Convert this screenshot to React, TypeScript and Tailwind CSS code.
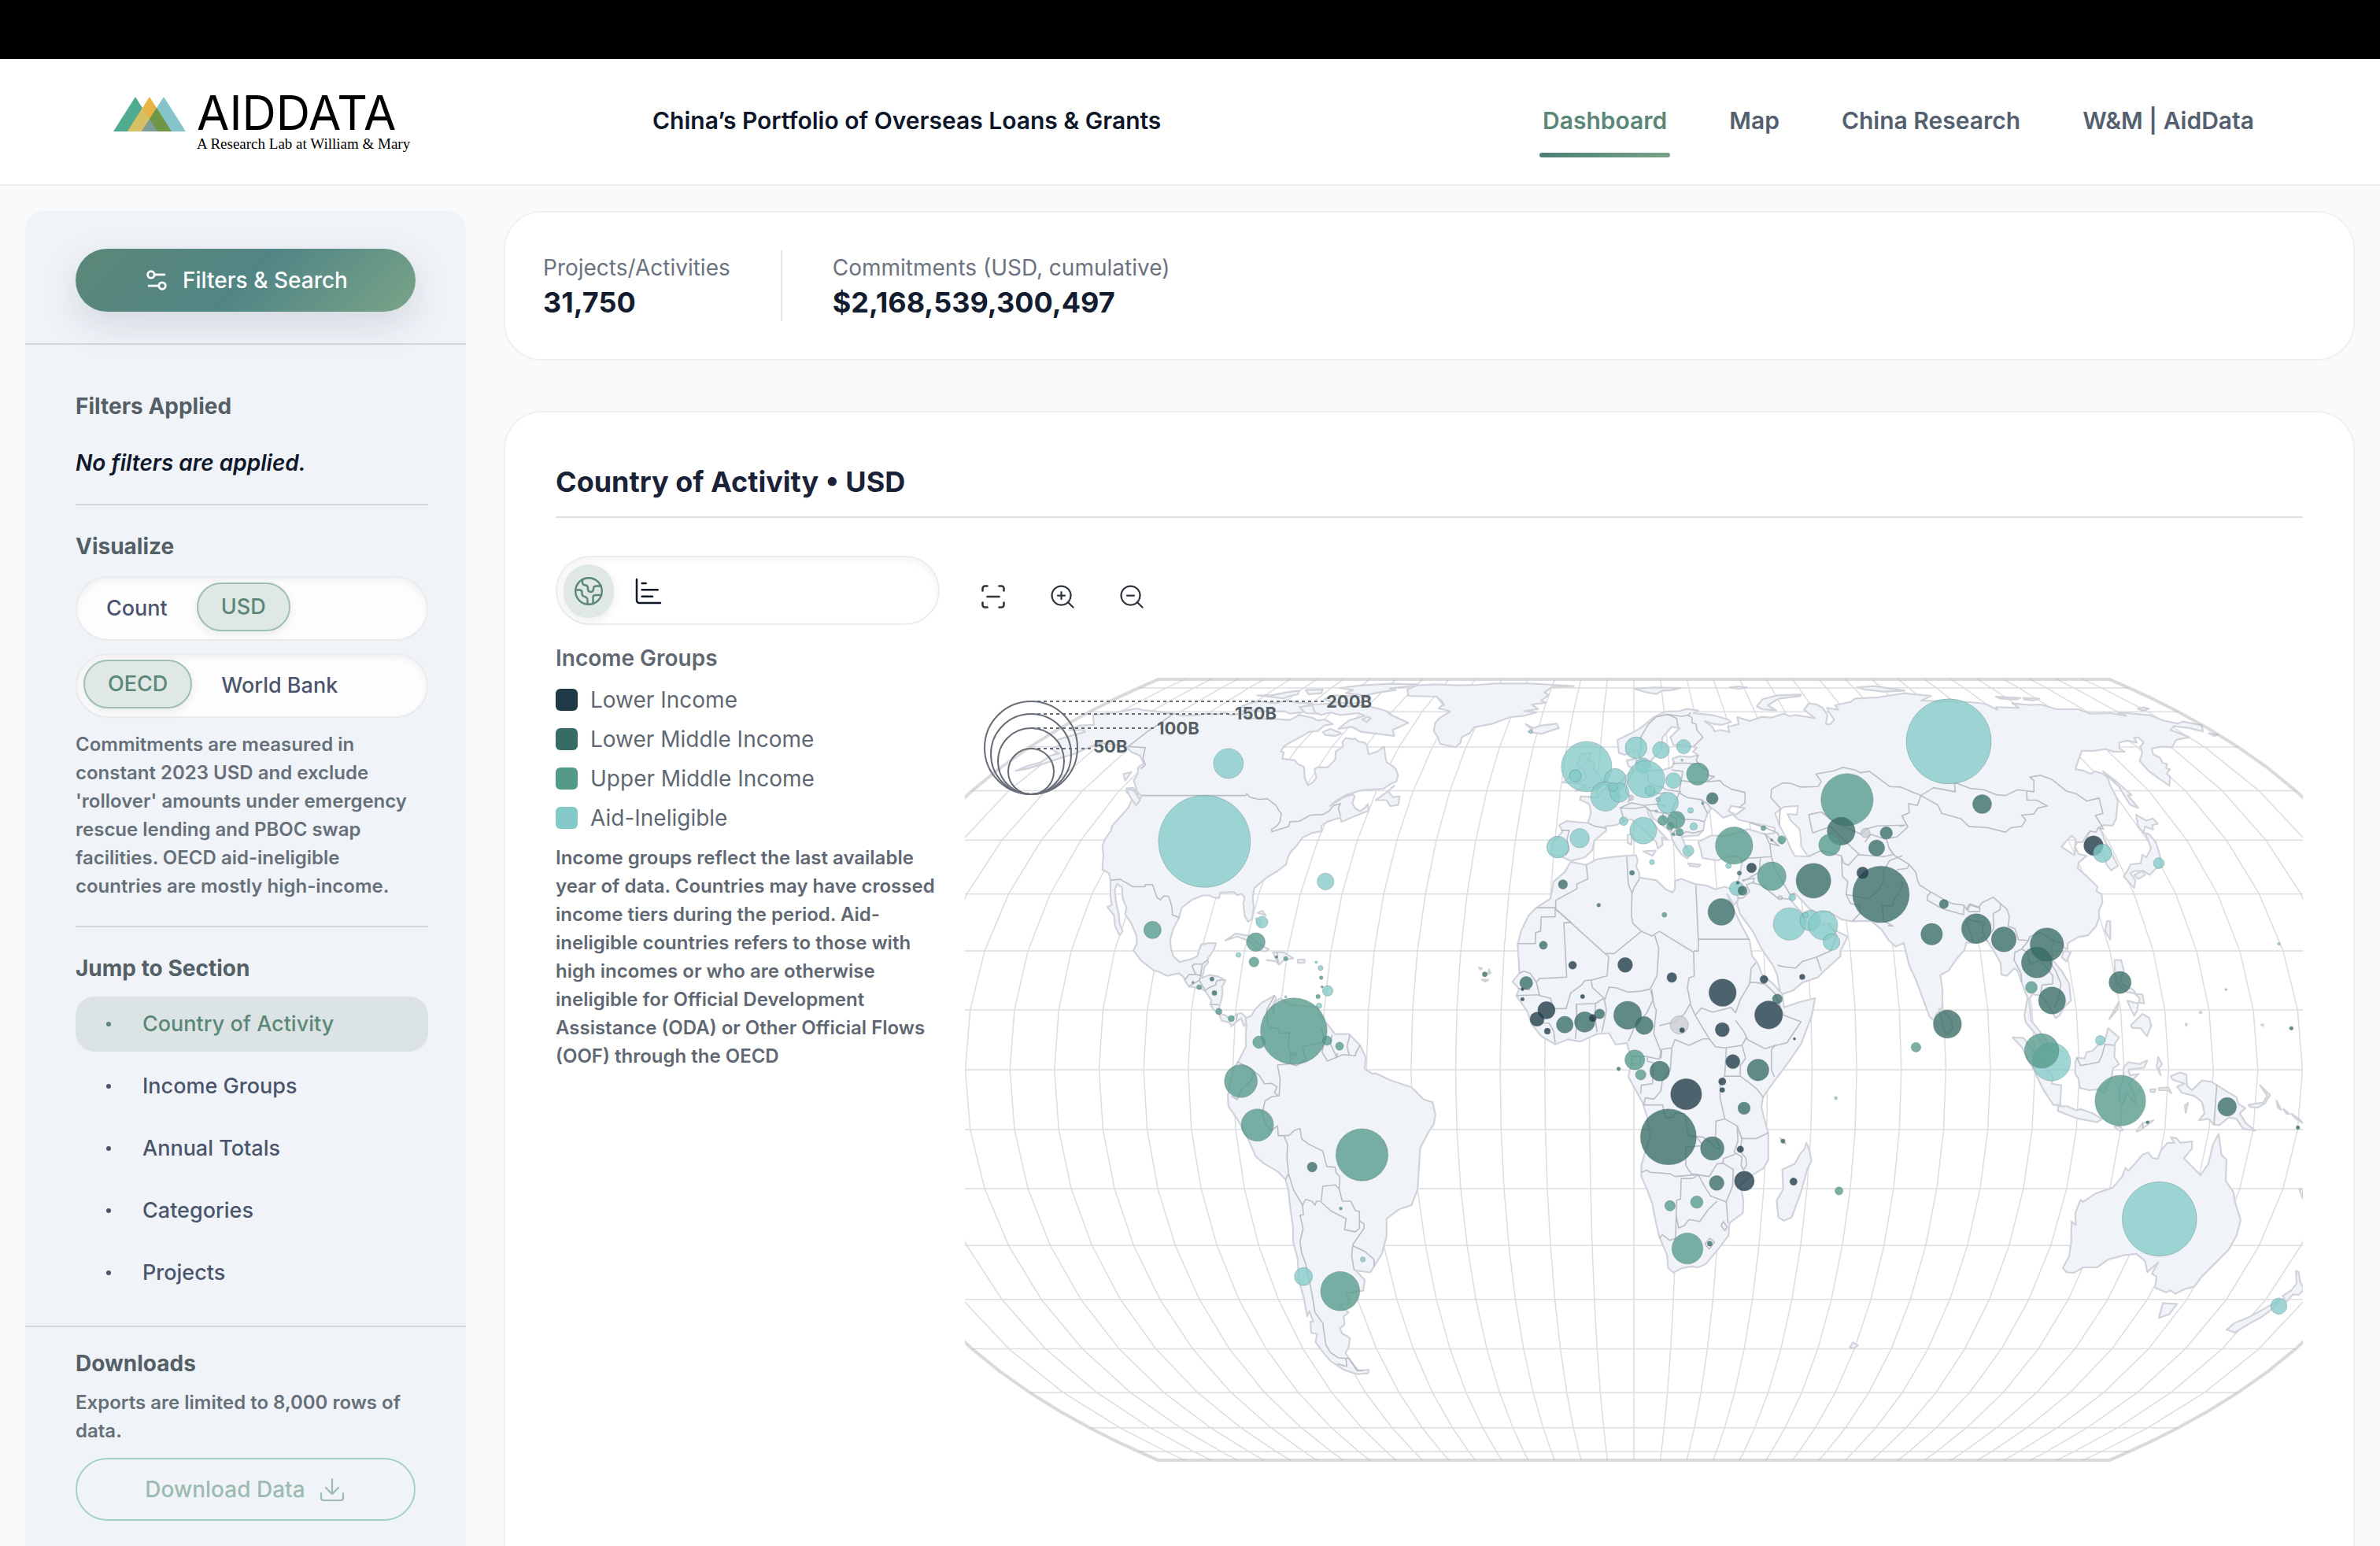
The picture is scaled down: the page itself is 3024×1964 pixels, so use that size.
import React from "react";
import { ChartBar, ScanLine, Settings2, ZoomIn, ZoomOut } from "lucide-react";

/* ------------------------------------------------------------------ */
/* Map geometry                                                        */
/* ------------------------------------------------------------------ */

// Survey tiles: origin on the map canvas and units per canvas pixel.
const TILES: Record<string, [number, number, number, number]> = {
  A: [1220, 840, 2.529, 3.002],
  B: [1800, 840, 2.529, 3.002],
  C: [2400, 840, 2.904, 3.002],
  D: [1220, 1340, 2.529, 2.904],
  E: [1800, 1300, 2.529, 2.8],
  F: [2400, 1300, 2.513, 2.8],
};

const place = (tile: string, x: number, y: number): [number, number] => {
  const [ox, oy, sx, sy] = TILES[tile];
  return [ox + x / sx, oy + y / sy];
};

// "A 10,20 30,40 B 5,6" -> path data; a letter switches the tile.
const trace = (line: string, closed: boolean) => {
  let tile = "A";
  const points: string[] = [];
  for (const token of line.trim().split(/\s+/)) {
    if (TILES[token]) {
      tile = token;
      continue;
    }
    const [x, y] = token.split(",").map(Number);
    const [px, py] = place(tile, x, y);
    points.push(`${px.toFixed(1)} ${py.toFixed(1)}`);
  }
  return `M${points.join("L")}${closed ? "Z" : ""}`;
};

const LAND = [
  // North and Central America
  "A 178,418 215,400 260,385 290,360 318,352 300,340 290,333 322,322 312,300 345,288 400,270 400,262 350,262 385,245 430,243 427,205 500,195 535,187 570,180 585,186 620,190 660,196 685,200 720,208 760,205 790,200 830,202 850,196 870,205 900,200 930,207 925,217 965,219 1010,220 1060,224 1090,205 1130,215 1150,226 1172,222 1198,240 1170,245 1150,265 1120,270 1100,285 1060,310 1040,325 1030,345 1040,348 1035,372 1075,378 1085,392 1105,402 1107,445 1117,472 1130,465 1145,445 1138,412 1150,404 1180,405 1205,375 1207,345 1230,325 1228,308 1240,293 1258,297 1270,295 1278,306 1300,310 1307,320 1312,355 1340,345 1362,325 1366,360 1370,385 1392,402 1400,412 1407,435 1402,458 1380,470 1360,487 1290,492 1240,510 1205,535 1188,552 1230,520 1262,508 1268,515 1260,540 1268,560 1285,572 1300,560 1310,545 1313,570 1265,592 1225,612 1222,596 1180,612 1160,628 1163,648 1130,655 1100,672 1080,705 1060,730 1053,748 1047,775 1020,800 985,825 945,865 940,900 943,940 937,985 925,993 914,970 910,925 914,902 905,887 890,892 880,880 835,882 832,903 812,900 800,893 780,893 745,910 712,940 703,978 685,1020 675,1060 677,1095 685,1125 705,1147 745,1135 762,1125 768,1100 775,1080 800,1075 822,1075 815,1100 795,1135 797,1150 785,1165 780,1195 770,1210 800,1197 830,1203 853,1217 842,1240 843,1270 836,1305 832,1320 838,1345 855,1352 868,1368 890,1345 905,1342 918,1358 920,1378 912,1392 903,1362 885,1378 872,1392 865,1378 840,1370 832,1345 815,1330 803,1308 808,1295 790,1262 775,1248 735,1240 722,1218 718,1205 703,1190 665,1200 640,1185 620,1178 580,1140 557,1103 568,1075 566,1045 550,1000 530,965 535,940 522,905 520,862 505,850 497,870 500,915 510,970 512,1000 522,1030 512,1045 498,1010 495,970 473,937 487,930 483,895 483,835 478,808 457,795 460,740 457,705 465,680 485,645 488,628 520,585 540,560 555,520 535,500 535,485 555,483 575,505 583,512 572,540 570,500 558,455 570,430 572,405 590,390 578,360 548,345 535,325 490,318 445,312 410,330 370,352 320,370 270,390 215,410",
  "A 955,130 1000,130 1050,118 1090,112 1085,126 1060,132 1040,142 990,135",
  "A 905,172 930,160 960,152 1010,160 1050,150 1085,158 1130,160 1105,175 1115,192 1060,200 1040,190 980,192 925,185",
  "A 1090,175 1130,168 1165,175 1150,200 1110,198",
  "A 1110,110 1165,108 1160,122 1120,126",
  "A 1170,145 1200,130 1300,135 1318,150 1260,162 1190,155",
  "A 1130,165 1180,162 1250,172 1300,168 1340,180 1370,190 1385,205 1440,235 1390,262 1395,285 1350,278 1290,270 1258,250 1215,258 1250,225 1300,208 1280,198 1220,205 1190,195 1160,205 1140,195",
  "A 1220,102 1290,92 1380,86 1470,88 1430,98 1380,104 1400,110 1350,118 1300,130 1240,122 1262,110",
  "A 1165,270 1190,258 1225,275 1205,285 1175,282",
  "A 1292,222 1308,212 1320,218 1306,232",
  "A 1395,475 1370,500 1335,530 1370,530 1382,553 1408,548 1412,515 1390,518 1375,495",
  "A 535,485 560,495 578,530 565,550 545,515",
  "A 525,430 550,423 530,455",
  "A 852,1065 885,1038 930,1048 960,1080 992,1098 980,1107 955,1100 925,1065 890,1050",
  "A 985,1140 1018,1145 1005,1110 1040,1110 1070,1133 1040,1140 1025,1157 1015,1145",
  "A 1085,1138 1107,1138 1107,1150 1085,1150",
  "A 955,960 972,952 982,970 972,965",
  "A 950,980 962,985 964,1010 955,1000",
  // Greenland, Iceland, Arctic islands
  "A 1440,132 1530,135 1548,152 1555,170 B 65,135 85,165 70,180 90,185 108,192 75,215 60,235 55,265 68,290 75,315 125,328 140,312 145,290 170,275 185,252 245,238 300,213 345,208 385,195 345,190 390,182 370,165 415,158 400,150 425,128 410,120 435,98 505,95 440,90 360,85 250,85 200,90 130,92 60,88 0,92 -30,108",
  "B 350,240 375,255 400,245 450,238 457,255 400,277 358,268 372,262",
  "B 700,105 760,100 850,102 820,110 790,112 770,125 735,118",
  "B 1235,127 1160,130 1112,145 1093,172 1110,183 1155,187 1128,168 1165,142 1232,133",
  "B 1005,100 1035,96 1062,100 1035,105",
  "B 1415,100 1470,95 1568,112 1500,116 1440,108",
  "C 395,135 450,138 485,140 470,146 410,142",
  "C 495,140 555,143 530,150 500,146",
  "C 918,181 940,176 960,182 935,188",
  "C 1180,275 1215,280 1200,285",
  // British Isles
  "B 530,355 560,350 550,378 572,385 568,410 590,440 602,465 570,480 510,495 545,475 518,465 545,445 535,410 515,395",
  "B 495,420 520,412 530,440 515,465 468,463 490,445",
  // Eurasia
  "B 645,300 690,275 715,258 730,245 760,215 800,192 845,190 870,182 905,188 890,198 950,205 1000,222 1010,232 980,243 950,238 925,228 950,250 958,268 975,262 1005,270 1000,250 1035,240 1030,213 1070,228 1110,212 1140,215 1180,200 1200,210 1215,205 1280,217 1245,185 1260,160 1285,165 1305,178 1320,205 1315,240 1330,240 1342,222 1325,195 1318,178 1355,185 1345,168 1395,155 1410,142 1480,138 1568,122 C 75,124 155,132 120,150 180,152 240,155 300,156 355,162 400,185 395,175 480,178 455,160 520,167 560,165 620,183 700,183 740,200 820,198 875,208 845,195 900,200 960,205 1010,225 1065,238 1085,230 1155,245 1158,268 1110,255 1050,248 1040,262 1108,290 1060,300 1045,328 1010,325 970,332 975,355 1000,368 1010,388 1027,392 1022,408 1037,412 1025,430 1038,440 1035,475 1000,450 960,420 925,380 935,350 928,325 940,310 920,290 905,292 915,310 880,303 850,310 850,332 870,345 830,345 800,335 755,342 712,342 700,375 688,412 720,418 745,430 760,420 790,430 808,445 815,470 845,530 838,600 825,627 790,625 775,635 785,650 795,680 815,720 845,780 820,797 803,775 795,740 750,740 735,720 725,700 735,655 715,690 695,690 685,712 690,680 675,665 655,685 637,708 662,725 685,740 688,710 700,735 730,742 700,768 697,790 730,820 770,860 765,875 785,890 788,920 775,950 775,980 765,1010 735,1045 700,1052 660,1075 660,1098 645,1092 640,1075 612,1070 600,1090 605,1140 640,1185 665,1230 672,1295 650,1315 630,1350 615,1362 605,1340 580,1300 560,1275 530,1270 517,1290 525,1370 555,1410 578,1440 590,1470 575,1475 540,1420 505,1378 500,1350 512,1285 490,1225 475,1180 462,1172 435,1200 415,1195 412,1150 385,1100 368,1075 350,1050 320,1075 285,1073 280,1100 250,1135 220,1180 190,1197 198,1260 197,1320 175,1345 165,1370 150,1355 130,1300 100,1215 75,1160 55,1075 25,1088 0,1065 B 1495,1025 1460,990 1400,992 1365,985 1325,955 1290,960 1262,945 1240,915 1215,885 1200,905 1215,930 1235,955 1245,985 1275,1010 1325,1000 1332,1020 1385,1050 1362,1105 1362,1125 1310,1180 1290,1205 1240,1225 1210,1255 1170,1272 1158,1195 1145,1160 1110,1100 1080,1030 1040,965 1030,930 1030,905 1018,875 1035,830 1045,770 1040,745 1000,745 965,760 918,750 912,715 905,690 945,665 1000,665 1040,650 1065,640 1120,660 1150,655 1150,635 1075,615 1035,605 1020,590 1055,560 1010,552 1002,572 1020,582 985,597 960,570 947,560 935,580 925,612 922,640 905,665 890,665 852,670 862,700 880,735 870,752 852,738 835,710 822,680 815,650 790,625 760,600 748,568 740,560 745,585 760,615 775,640 806,680 788,672 790,700 775,715 770,690 740,655 710,625 690,602 665,610 640,625 605,630 610,645 570,685 565,720 540,748 495,762 465,745 430,735 440,690 468,650 458,625 480,610 550,617 560,580 555,545 525,528 528,515 580,520 600,490 650,465 680,430 700,412 680,400 675,378 705,372 710,408 740,418 790,415 820,405 828,388 822,372 845,362 880,365 905,358 888,345 900,330 855,318 825,320 815,290 845,255 820,250 790,290 785,340 760,370 740,395 722,375 705,335 670,357 650,350",
  // Africa
  "B 495,765 545,777 580,755 620,748 670,742 705,740 710,760 705,785 715,805 715,825 770,835 800,870 822,882 830,868 830,838 850,830 895,850 930,855 960,870 990,860 1020,872 1035,905 1020,930 998,888 1015,940 1045,1010 1070,1065 1078,1125 1095,1150 1110,1195 1145,1230 1175,1270 1180,1320 1230,1300 1280,1285 1270,1350 1235,1460 1200,1520 E 1150,205 1130,235 1112,265 1108,300 1118,345 1130,390 1130,485 1115,515 1085,535 1040,575 1050,630 1048,675 1005,710 1002,755 975,795 930,855 905,868 880,865 850,872 825,887 808,870 805,825 780,760 767,700 757,640 740,590 722,545 722,505 735,455 750,400 740,330 725,280 700,230 680,190 692,130 675,70 640,75 628,55 618,35 580,38 525,65 485,57 445,75 B 400,1430 370,1385 355,1335 320,1275 330,1250 308,1222 330,1190 325,1080 335,1030 360,970 385,940 430,905 440,840 475,805",
  "E 1252,425 1262,450 1268,490 1255,520 1235,600 1205,690 1180,702 1162,690 1157,630 1178,590 1175,520 1215,500 1235,460 1245,450",
  // South America
  "A 920,1390 917,1362 935,1352 950,1325 968,1303 1010,1275 1015,1285 1002,1320 1008,1350 1010,1300 1030,1285 1060,1310 1110,1315 1150,1318 1152,1340 1170,1370 1205,1422 1250,1422 1285,1465 1303,1510 1300,1555 D 1325,70 1335,68 1385,95 1450,120 1490,165 1518,175 1527,220 1522,255 1505,285 1478,345 1475,400 1470,495 1455,540 1450,555 1410,570 1370,605 1370,670 1355,735 1330,780 1318,803 1270,795 1300,830 1295,870 1240,880 1252,915 1218,925 1248,950 1232,965 1235,995 1220,1010 1228,1028 1252,1045 1248,1080 1238,1100 1255,1130 1280,1165 1313,1162 1310,1175 1275,1178 1235,1163 1190,1130 1168,1100 1142,1060 1147,1030 1128,1025 1125,985 1135,985 1122,945 1115,965 1105,900 1088,830 1085,755 1070,690 1070,640 1060,560 1055,500 1045,460 1020,430 975,400 950,375 925,310 895,245 862,190 860,150 868,100 878,50 895,22 A 905,1500 918,1470 918,1410",
  // Oceania and South-East Asia
  "F 555,870 575,830 582,780 583,705 597,718 595,675 612,628 620,635 660,605 715,585 745,545 755,515 765,525 785,500 810,467 828,460 842,480 858,482 870,450 890,425 912,425 900,405 920,410 930,425 968,420 968,445 942,480 995,540 1020,500 1035,430 1053,393 1062,468 1078,485 1075,560 1100,600 1105,635 1115,670 1123,700 1110,755 1085,805 1045,850 1000,900 975,937 945,945 915,962 900,950 885,957 850,940 855,902 840,890 860,850 825,885 818,845 790,820 750,825 700,840 665,868 620,868 590,888 568,886",
  "F 875,995 920,998 895,1035 862,1048",
  "F 1078,1090 1105,1065 1150,1045 1215,1005 1250,985 1225,1015 1190,1045 1155,1065 1105,1100",
  "F 1257,970 1285,950 1302,925 1300,880 1308,885 1313,920 1326,945 1310,965 1290,965 1270,990",
  "F 900,188 930,175 950,182 952,222 968,238 1000,203 1030,208 1075,240 1110,262 1115,285 1138,302 1120,320 1140,355 1170,382 1130,375 1110,340 1085,335 1055,362 1038,360 1020,340 990,345 1008,320 1000,280 975,258 935,247 920,225 945,215 905,200",
  "F 600,122 625,125 632,102 650,98 675,70 690,60 700,18 735,50 722,72 720,120 735,145 715,160 712,190 695,225 688,250 670,235 640,238 610,230 605,195 595,180 595,140",
  "F 395,50 430,52 470,110 500,160 525,190 520,215 550,220 547,290 525,290 490,230 460,160 425,85",
  "F 540,295 570,295 600,310 612,305 650,320 680,340 665,352 600,338 540,312",
  "F 750,155 765,138 800,145 825,132 815,158 765,165 770,185 798,180 768,212 790,270 785,285 760,245 750,285 738,280 735,230 748,200",
  "F 860,120 872,145 862,160 868,185 855,155",
  "F 790,385 810,355 845,345 815,370 800,382",
  "F 720,368 735,365 748,380 738,383",
  "F 835,235 852,235 848,245 835,243",
  "F 862,230 892,228 902,248 890,238 862,238",
  "F 945,292 955,283 948,318",
  "F 1148,290 1195,282 1208,258 1185,220 1217,255 1200,285 1178,300 1155,298",
  "F 1238,275 1253,308 1242,300",
  "F 1260,305 1278,322 1268,320",
  "F 1285,322 1310,340 1322,355 1300,340",
  "F 1310,590 1322,590 1322,625",
  "C 833,1140 857,1140 867,1180 855,1215 865,1235 900,1252 912,1268 880,1262 850,1240 835,1200",
  "C 910,1270 935,1270 942,1305 922,1302 925,1285",
  "C 880,1295 920,1305 915,1335 905,1352 890,1320",
  "C 893,1388 910,1370 935,1345 960,1360 968,1390 952,1430 930,1400 898,1398",
  "C 848,1300 842,1330 813,1365 835,1325",
  "C 805,990 817,992 817,1062 798,1030",
  "C 645,1105 672,1108 655,1145 638,1130",
  // Japan and Sakhalin
  "C 945,655 960,660 985,690 1000,740 1005,785 985,790 962,815 940,800 905,800 890,808 910,835 905,865 888,845 866,820 880,800 892,775 930,770 935,738 950,748 967,715 960,690",
  "C 912,585 950,608 975,600 992,620 972,625 975,642 945,630 940,655 920,630",
  "C 790,420 840,460 895,510 882,512 920,560 890,548 850,480",
  "C 905,815 935,800 945,815 920,830",
  // Small islands
  "B 728,725 768,722 758,742",
  "B 678,662 692,660 690,700 678,692",
  "B 872,770 912,776 905,784 878,780",
  "C 185,1325 205,1335 232,1370 235,1400 215,1425 200,1400",
  "E 1392,1152 1402,1135 1418,1145 1405,1157",
  "B 200,1168 210,1172 204,1176",
  "B 232,1175 238,1190 230,1192",
  "B 210,1215 230,1215 220,1222",
  "E 1168,408 1174,418 1186,428 1178,424",
  "C 1147,1337 1153,1337 1153,1342 1147,1342",
  "C 1095,1382 1100,1384 1097,1391",
  "C 1374,1386 1382,1386 1380,1392",
];

const SEAS = [
  "B 1152,580 1180,555 1225,552 1222,585 1192,582 1200,605 1230,640 1235,680 1235,705 1258,745 1215,742 1200,710 1190,680 1165,625",
];

const BORDERS = [
  "A 583,512 917,512 921,505 930,518 960,527 987,524 1015,550 1025,572 1032,580 1028,610 1018,628 1000,642 1002,650 1055,630 1060,612 1090,610 1125,587 1165,585 1185,572 1200,550 1222,543 1215,560 1222,590",
  "A 685,200 640,238 600,270 540,325 595,330 587,370 595,395 580,410",
  "A 483,835 515,832 555,860 593,860 595,852 618,852 632,900 643,910 655,895 670,897 680,935 682,968 705,978",
  "A 722,1215 735,1195 757,1195 745,1162 752,1155 778,1155 795,1140",
  "A 778,1155 772,1200 755,1192",
  "A 735,1240 768,1217 772,1208",
  "A 768,1217 788,1255 800,1245 820,1235 825,1218 850,1215",
  "A 805,1308 830,1310",
  "A 890,1345 887,1372",
  "A 1018,1110 1022,1150",
  "A 1010,1275 985,1330 988,1385 1000,1397 1020,1400 1028,1420 1058,1415 1055,1470 1062,1500 1060,1535 1020,1540 D 1020,40 1028,90 1025,152 1010,140 1018,118 1000,105 978,107 960,75 945,62 915,40 890,25",
  "D 945,62 935,95 905,125 890,165 872,152",
  "D 1025,150 1000,155 980,170 970,215 985,262 1000,280 1020,262 1022,298 1040,298 1052,330 1050,380 1055,440 1045,460",
  "D 1040,298 1055,298 1075,278 1092,272 1097,310 1120,330 1165,355 1178,412 1205,415 1208,435 1220,450 1218,495 1205,480 1165,485 1160,540 1145,540 1140,555 1130,540 1110,533 1100,555 1072,500 1055,440",
  "D 1218,495 1228,540 1255,540 1270,575 1283,578 1283,640 1270,653 1235,645 1240,605 1190,575 1160,543",
  "D 1283,612 1298,625 1298,640 1262,700 1258,740 1266,795",
  "D 1262,705 1300,725 1330,755 1330,780",
  "D 1100,555 1103,590 1092,592 1102,640 1092,690 1097,730 1110,770 1130,880 1140,950 1165,990 1175,1070 1190,1098 1215,1118 1250,1120 1275,1165 1295,1165",
  "D 1240,1120 1242,1150 1212,1140",
  "A 1170,1450 1163,1490 1180,1525 1210,1510 1212,1495",
  "A 1195,1425 1190,1460 1210,1510 1230,1500 1270,1505 1272,1492 1285,1465",
  "A 1252,1425 1243,1470 1250,1502",
  "A 1060,1535 1080,1542 1110,1520 1100,1470 1160,1455 1170,1440 1160,1400",
  "B 720,350 720,290 745,240 770,212 805,203 835,218 840,250",
  "B 805,203 850,210 875,205 880,195",
  "B 870,205 885,215 885,235 898,240 900,262 920,290 890,325",
  "B 905,358 898,378 912,400 935,415 935,435 957,440 930,460 890,462 850,455 855,420 820,415",
  "B 822,390 860,388 898,392",
  "B 850,455 845,490 848,505 870,520 915,528 935,545 945,560",
  "B 930,460 975,455 985,470 1012,488 1055,500 1055,540 1035,560",
  "B 915,528 925,560 935,580",
  "B 740,418 745,460 775,478 790,480 800,490 845,497",
  "B 700,415 685,440 675,470 672,500 690,520 678,540",
  "B 652,560 690,540 730,550 770,545 800,552",
  "B 655,560 700,562 735,555 750,570 775,570",
  "B 845,497 835,530 820,570 860,603 900,605 925,612",
  "B 550,617 575,630 610,637",
  "B 465,645 490,645 483,680 490,720 478,740",
  "B 655,560 662,590 660,600 672,612",
  "B 740,490 780,505 800,500",
  "B 770,575 800,580 835,600 835,640 820,660 850,665 865,650 890,655 922,645",
  "B 790,580 795,610 815,630 820,650",
  "B 610,490 640,500 665,520",
  "B 1120,660 1135,700 1140,745 1105,748 1060,752 1045,765",
  "B 1070,615 1120,635 1160,655 1175,700",
  "B 1115,655 1150,690 1165,705 1135,695",
  "B 1105,748 1100,805 1048,840",
  "B 1045,835 1085,828 1080,845 1060,852 1070,878 1050,902 1030,905",
  "B 1080,845 1110,855 1160,903 1205,908",
  "B 1140,745 1150,790 1180,850 1200,890 1215,885",
  "B 1258,745 1300,722 1365,742",
  "B 1365,742 1368,820 1385,840 1380,890 1395,925 1422,930 1425,960 1400,992",
  "B 1365,742 1372,770 1388,778 1418,738 1470,742 1500,745 1530,738",
  "B 1380,890 1450,905 1480,880 1500,840 1500,800 1520,760 1560,742",
  "C 50,840 45,870 25,900 10,935 -25,930 -20,990 15,1010 -5,1008",
  "B 1165,625 1168,560 1138,520 1140,488 1175,465 1200,465 1235,480 1290,478 1300,458 1283,430 1340,418 1370,405 1410,415 1425,425 1455,420 1520,478 C 45,480 85,498 118,512 105,550 73,543 75,578 48,590 70,632 30,670 0,675",
  "B 1272,655 1260,585 1300,575 1350,620 1430,660 1445,640 1480,628 1568,625 C 40,630 60,625",
  "B 1272,655 1330,630 1380,690 1425,740",
  "B 1440,690 1460,660 1510,680 1515,700 C 0,712 15,735",
  "B 1160,1160 1180,1165 1218,1170 1240,1145 1285,1128 1300,1180",
  "B 1285,1128 1330,1105 1350,1045 1325,1000",
  "C 118,512 165,482 245,498 242,462 300,485 350,490 400,510 430,512 475,490 535,498 535,455 520,442 560,435 600,450 655,495 690,505 730,533 775,522 790,580 762,588 790,635",
  "C 118,512 180,548 195,580 265,600 295,630 365,635 430,652 450,635 490,630 505,605 490,587 535,582 550,560 585,552 545,530 510,530 508,497",
  "C 735,660 742,648 765,652 772,635 795,640",
  "C 755,735 800,725",
  "C 0,710 20,740 75,775 68,790 30,795",
  "C 75,775 100,805 105,835 115,855 155,880 205,910 235,925 275,930 290,950 300,930 330,940 345,920 385,900 412,925 435,945 445,975 440,1010 465,1020 478,1062 515,1065 520,1050 560,1035 612,1070",
  "C 155,880 142,895 142,912 200,945 275,967 278,930",
  "C 288,940 298,925 335,940 335,955 295,955 288,940",
  "C 285,990 300,1035 310,1070",
  "C 290,985 350,998 345,1030 365,1070",
  "C 412,925 410,948 385,962 387,1020 365,1050",
  "C 515,1065 490,1098 465,1110 462,1140 488,1190 490,1225",
  "C 490,1098 510,1110 520,1155 560,1140 605,1200 605,1230 565,1235 558,1280",
  "C 560,1090 575,1120 615,1180 635,1230 625,1290 610,1320",
  "F 600,122 612,150 640,145 670,138 680,115 690,75 718,78",
  "F 1047,218 1038,360",
  "F 810,355 812,372",
  "B 545,777 550,830 515,850 515,868 447,912 447,945 605,1115 635,1115 722,1030 695,1000 690,970 692,885 680,850 675,745",
  "B 692,885 700,860 716,830",
  "B 385,940 445,940 445,975 400,975 398,1030 382,1035 382,1077 325,1077",
  "B 447,945 497,997 473,997 482,1205 395,1210 385,1225 365,1190 345,1182 328,1190",
  "B 605,1115 617,1125 612,1200 565,1215 540,1218 530,1235 495,1265 480,1325 440,1325 430,1285 395,1275 385,1225",
  "B 722,1030 755,1048 780,1030 890,1110 892,1200 875,1208 870,1245 880,1305 860,1345 830,1375 780,1390",
  "B 765,1045 778,1095 772,1200 750,1250 720,1258 680,1262 640,1245 618,1243 605,1290",
  "B 897,855 905,1060 1070,1060",
  "B 905,1060 905,1105 890,1105",
  "B 560,1215 565,1245 602,1285 575,1305 513,1308 515,1340",
  "B 602,1285 610,1330 595,1415",
  "B 575,1305 572,1350 580,1415",
  "B 513,1308 515,1380 510,1440",
  "B 400,1380 425,1380 440,1410 445,1455",
  "B 320,1275 395,1272",
  "B 325,1248 365,1252",
  "B 755,1250 760,1290 740,1340 700,1395 680,1450",
  "B 752,1255 765,1320 770,1330 762,1420 785,1490",
  "B 785,1515 788,1480 820,1475 830,1443 875,1465 920,1440 940,1440 905,1370 895,1350 880,1310",
  "B 895,1350 915,1322 950,1338 980,1330 1010,1320 1025,1340 1040,1290 1070,1230 1075,1170 1090,1150",
  "B 1068,1225 1090,1225 1120,1232 1150,1265 1180,1350 1235,1375 1190,1455 1145,1468 1120,1478 1065,1445 1050,1410 1025,1370",
  "B 940,1440 960,1470 990,1475 1045,1465 1060,1435",
  "B 1155,1462 1140,1480 1140,1560 1150,1585",
  "E 820,90 815,165 790,200 785,240 762,270 735,265 730,290 790,290 800,335 825,335 830,318 862,322 872,400 920,405 940,420 960,445 975,445 960,405 962,348 990,340 975,265 975,215 990,185 995,90",
  "E 1045,75 1057,125 1040,150 1040,188 990,188",
  "E 1040,188 1090,230 1115,265",
  "E 990,340 1030,365 1045,410 1090,410 1130,390",
  "E 1030,365 1032,420 1020,458 1045,475 1043,505 1050,522 1060,505 1058,480 1040,455 1045,410",
  "E 900,405 920,435 865,440 865,505 882,535 940,545 965,500 985,498 985,482 1025,465",
  "E 722,530 740,522 750,530 815,535 830,545 905,538",
  "E 905,538 925,580 945,615 995,635 1015,580 1018,520 980,495",
  "E 905,540 885,552 850,552 848,625 835,630 832,765 812,772 790,752 780,765",
  "E 833,680 842,728 860,720 875,698 910,705 935,665 965,632",
  "E 995,635 1000,710",
  "E 978,720 985,705 998,725 990,737 978,720",
  "E 926,785 942,765 957,778 940,803 926,785",
  "E 690,118 740,118 780,128 785,100",
  "E 690,118 690,145 718,145 718,118",
  "E 742,118 742,135 760,140 758,215 722,220 720,250",
];

const TIER_FILL = { L: "#1e3a46", M: "#376b65", U: "#549a8b", I: "#84cac8", G: "#cccdd3" } as const;
type Tier = keyof typeof TIER_FILL;

// tier, tile, x, y, radius (all in tile units)
const BUBBLES: [Tier, string, number, number, number][] = [
  ["I", "A", 785, 687, 148], ["I", "A", 862, 390, 48], ["I", "A", 1174, 840, 27], ["I", "A", 970, 995, 19],
  ["U", "A", 618, 1025, 28], ["U", "A", 950, 1071, 30], ["U", "A", 944, 1147, 16], ["I", "A", 894, 1120, 8],
  ["U", "A", 1046, 1134, 7], ["M", "A", 1016, 1128, 4], ["I", "A", 1144, 1148, 4], ["I", "A", 1158, 1170, 8],
  ["U", "A", 1160, 1207, 6], ["U", "A", 1163, 1242, 4], ["I", "A", 1181, 1257, 17], ["U", "A", 1150, 1279, 7],
  ["I", "A", 1153, 1314, 9], ["M", "A", 809, 1212, 7], ["U", "A", 748, 1225, 4], ["U", "A", 768, 1243, 8],
  ["M", "A", 817, 1265, 8], ["U", "A", 831, 1336, 10], ["U", "A", 871, 1363, 10], ["I", "A", 1046, 1280, 4],
  ["G", "A", 1073, 1497, 8], ["U", "A", 1072, 1411, 107], ["U", "A", 960, 1453, 20], ["U", "A", 1179, 1447, 15],
  ["U", "A", 1219, 1468, 13],
  ["U", "D", 902, 97, 53], ["U", "D", 955, 259, 52], ["U", "D", 1291, 369, 84], ["M", "D", 1131, 414, 16],
  ["U", "D", 1223, 567, 5], ["I", "D", 1294, 755, 8], ["I", "D", 1103, 818, 29], ["U", "D", 1221, 872, 63],
  ["I", "B", 367, 269, 6], ["I", "B", 546, 402, 81], ["I", "B", 510, 437, 19], ["I", "B", 705, 330, 35],
  ["I", "B", 785, 339, 27], ["I", "B", 858, 326, 23], ["I", "B", 853, 377, 4], ["I", "B", 727, 398, 25],
  ["I", "B", 737, 450, 60], ["I", "B", 638, 452, 36], ["I", "B", 825, 455, 25], ["I", "B", 606, 516, 47],
  ["I", "B", 651, 501, 31], ["I", "B", 631, 480, 14], ["I", "B", 750, 493, 16], ["I", "B", 807, 540, 34],
  ["I", "B", 775, 527, 7], ["I", "B", 770, 572, 4], ["I", "B", 665, 610, 14], ["I", "B", 880, 569, 9],
  ["I", "B", 890, 630, 12], ["I", "B", 728, 646, 43], ["I", "B", 524, 675, 31], ["I", "B", 453, 709, 35],
  ["I", "B", 873, 723, 18], ["I", "B", 756, 766, 8], ["I", "B", 1002, 780, 9], ["G", "B", 689, 521, 8],
  ["U", "B", 903, 430, 36], ["M", "B", 950, 523, 19], ["U", "B", 919, 542, 4], ["U", "B", 834, 605, 28],
  ["U", "B", 791, 607, 16], ["U", "B", 815, 629, 12], ["U", "B", 845, 652, 12], ["U", "B", 825, 660, 5],
  ["U", "B", 1020, 703, 60], ["U", "B", 1114, 637, 8], ["U", "B", 1173, 681, 13], ["U", "B", 1141, 682, 4],
  ["U", "B", 1383, 528, 84], ["M", "B", 1364, 648, 45], ["U", "B", 1327, 701, 35], ["G", "B", 1442, 655, 15],
  ["M", "B", 1509, 655, 20], ["M", "B", 1478, 712, 26], ["M", "B", 1492, 889, 91], ["L", "B", 1433, 807, 19],
  ["M", "B", 1275, 837, 56], ["U", "B", 1141, 820, 46], ["L", "B", 1076, 788, 16], ["M", "B", 1037, 808, 7],
  ["I", "B", 1028, 866, 23], ["M", "B", 1047, 875, 15], ["M", "B", 1032, 845, 5], ["M", "B", 979, 956, 43],
  ["I", "B", 1207, 901, 11], ["G", "B", 1168, 902, 7], ["I", "B", 1198, 1002, 52], ["I", "B", 1264, 989, 33],
  ["I", "B", 1249, 968, 9], ["I", "B", 1306, 1007, 47], ["I", "B", 1333, 1071, 27], ["L", "B", 1239, 1204, 9],
  ["L", "B", 1116, 1213, 13], ["M", "B", 1159, 1288, 16], ["L", "B", 1131, 1349, 45], ["L", "B", 1214, 1440, 4],
  ["M", "B", 692, 807, 8], ["M", "B", 470, 851, 15], ["M", "B", 585, 930, 6], ["U", "B", 796, 967, 8],
  ["M", "B", 407, 1083, 13], ["L", "B", 501, 1159, 13], ["L", "B", 670, 1158, 24], ["L", "B", 820, 1206, 16],
  ["L", "B", 983, 1264, 44], ["L", "B", 982, 1405, 23], ["M", "B", 219, 1194, 8], ["M", "B", 352, 1227, 21],
  ["L", "B", 340, 1251, 5], ["L", "B", 340, 1289, 6], ["L", "B", 417, 1331, 28], ["L", "B", 387, 1365, 23],
  ["L", "B", 420, 1411, 10], ["M", "B", 476, 1386, 27], ["M", "B", 540, 1376, 33], ["L", "B", 566, 1361, 12],
  ["M", "B", 588, 1345, 16], ["L", "B", 533, 1279, 7], ["M", "B", 678, 1350, 45], ["M", "B", 731, 1389, 29],
  ["G", "B", 844, 1387, 29], ["L", "B", 853, 1407, 8],
  ["U", "E", 701, 130, 32], ["U", "E", 720, 183, 17], ["M", "E", 649, 162, 6], ["M", "E", 781, 170, 32],
  ["L", "E", 1016, 136, 23], ["M", "E", 1097, 166, 35], ["L", "E", 982, 207, 12], ["L", "E", 982, 237, 8],
  ["L", "E", 866, 252, 50], ["M", "E", 809, 404, 90], ["M", "E", 1052, 302, 20], ["M", "E", 950, 445, 38],
  ["L", "E", 1040, 448, 11], ["M", "E", 1177, 419, 7], ["I", "E", 1347, 266, 5], ["L", "E", 1211, 563, 12],
  ["U", "E", 1357, 596, 13], ["L", "E", 1053, 561, 32], ["M", "E", 964, 568, 24], ["U", "E", 900, 636, 20],
  ["U", "E", 814, 649, 17], ["U", "E", 870, 801, 50], ["M", "E", 942, 784, 8],
  ["I", "C", 221, 306, 157], ["M", "C", 344, 545, 35], ["L", "C", 755, 703, 36], ["I", "C", 788, 732, 34],
  ["I", "C", 996, 770, 20], ["M", "C", 203, 926, 17], ["M", "C", 158, 1041, 40], ["M", "C", 323, 1020, 55],
  ["M", "C", 424, 1061, 46], ["M", "C", 583, 1081, 62], ["M", "C", 546, 1149, 57], ["U", "C", 526, 1244, 22],
  ["M", "C", 602, 1294, 50], ["M", "C", 216, 1384, 52], ["M", "C", 853, 1225, 41], ["I", "C", 1439, 1078, 5],
  ["I", "C", 1244, 1252, 4], ["M", "C", 1485, 1400, 7], ["U", "C", 100, 1472, 18], ["I", "C", 780, 1446, 18],
  ["I", "F", 519, 137, 61], ["U", "F", 488, 98, 55], ["U", "F", 739, 275, 81], ["M", "F", 1080, 297, 30],
  ["M", "F", 1306, 371, 6], ["M", "F", 826, 352, 5], ["I", "F", 864, 696, 119], ["I", "F", 1245, 1006, 26],
];

// Equal Earth projection
const SCALE = 376.6;
const CENTER: [number, number] = [2076, 1359];
const project = (lon: number, lat: number) => {
  const rad = Math.PI / 180;
  const m = Math.sqrt(3) / 2;
  const t = Math.asin(m * Math.sin(lat * rad));
  const t2 = t * t;
  const t6 = t2 * t2 * t2;
  const x =
    (lon * rad * Math.cos(t)) /
    (m * (1.340264 + 3 * -0.081106 * t2 + t6 * (7 * 0.000893 + 9 * 0.003796 * t2)));
  const y = t * (1.340264 + -0.081106 * t2 + t6 * (0.000893 + 0.003796 * t2));
  return `${(CENTER[0] + SCALE * x).toFixed(1)} ${(CENTER[1] - SCALE * y).toFixed(1)}`;
};

const range = (from: number, to: number, step: number) =>
  Array.from({ length: Math.round((to - from) / step) + 1 }, (_, i) => from + i * step);

const GRATICULE = [
  ...range(-170, 170, 10).map((lon) => "M" + range(-90, 90, 10).map((lat) => project(lon, lat)).join("L")),
  ...range(-80, 80, 10).map((lat) => `M${project(-180, lat)}L${project(180, lat)}`),
].join("");

const OUTLINE =
  "M" +
  [
    ...range(-90, 90, 5).map((lat) => project(-180, lat)),
    ...range(-90, 90, 5).map((lat) => project(180, -lat)),
  ].join("L") +
  "Z";

const SIZE_KEY = [
  { label: "200B", r: 59, x: 1685, y: 899 },
  { label: "150B", r: 51, x: 1569, y: 914 },
  { label: "100B", r: 42, x: 1470, y: 933 },
  { label: "50B", r: 29, x: 1389, y: 956 },
];

function WorldMap() {
  return (
    <svg
      viewBox="1226 810 1700 1080"
      className="block w-full"
      role="img"
      aria-label="World map of commitments by country"
    >
      <path d={GRATICULE} fill="none" stroke="#dcdde0" strokeWidth="1.5" />
      <g fill="#f0f4f9" stroke="#d1d3da" strokeWidth="2.2" strokeLinejoin="round">
        {LAND.map((d) => (
          <path key={d} d={trace(d, true)} />
        ))}
      </g>
      <g fill="#ffffff" stroke="#d1d3da" strokeWidth="2">
        {SEAS.map((d) => (
          <path key={d} d={trace(d, true)} />
        ))}
      </g>
      <g fill="none" stroke="#babdc5" strokeWidth="1.6" strokeLinejoin="round">
        {BORDERS.map((d) => (
          <path key={d} d={trace(d, false)} />
        ))}
      </g>
      <path d={OUTLINE} fill="none" stroke="#b4b5bc" strokeOpacity="0.5" strokeWidth="4" />
      <g stroke="#5f6b74" strokeOpacity="0.3" strokeWidth="1" fillOpacity="0.78">
        {BUBBLES.map(([tier, tile, x, y, r], i) => {
          const [cx, cy] = place(tile, x, y);
          return <circle key={i} cx={cx} cy={cy} r={r / TILES[tile][2]} fill={TIER_FILL[tier]} />;
        })}
      </g>
      <g fill="none" stroke="#666d77" strokeWidth="2">
        {SIZE_KEY.map(({ label, r }) => (
          <circle key={label} cx="1310" cy={1009 - r} r={r} />
        ))}
        {SIZE_KEY.map(({ label, r, x }) => (
          <line key={label} x1="1310" x2={x} y1={1009 - 2 * r} y2={1009 - 2 * r} strokeDasharray="4 4" />
        ))}
      </g>
      <g fill="#545f66" className="text-[22px] font-bold">
        {SIZE_KEY.map(({ label, x, y }) => (
          <text key={label} x={x} y={y}>
            {label}
          </text>
        ))}
      </g>
    </svg>
  );
}

/* ------------------------------------------------------------------ */
/* Page parts                                                          */
/* ------------------------------------------------------------------ */

function Logo() {
  return (
    <a href="#home" aria-label="AidData home" className="flex w-[380px] items-start gap-[14px] text-black">
      <svg viewBox="0 0 92 44" className="mt-2 h-11 w-[92px] shrink-0" aria-hidden="true">
        <path d="M0 44 28 0 56 44Z" fill="#50ac90" />
        <path d="M18 44 46 0 74 44Z" fill="#e7b344" />
        <path d="M36 44 64 0 92 44Z" fill="#85c5c9" />
        <path d="M18 44 37 14 56 44Z" fill="#d5c063" />
        <path d="M36 44 55 14 74 44Z" fill="#6f9645" />
        <path d="M36 44 46 28 56 44Z" fill="#7d9e98" />
      </svg>
      <span className="flex flex-col whitespace-nowrap">
        <span className="text-[60px] leading-[56px]">AIDDATA</span>
        <span className="font-['Liberation_Serif',serif] text-[19px] leading-6">
          A Research Lab at William &amp; Mary
        </span>
      </span>
    </a>
  );
}

const NAV = ["Dashboard", "Map", "China Research", "W&M | AidData"];

function Header() {
  return (
    <header className="flex h-[161px] items-center border-b-2 border-[#f0f1f2] bg-white pr-[156px] pl-36">
      <Logo />
      <p className="ml-[305px] pb-0.5 text-[30px] font-semibold whitespace-nowrap text-[#0f172a]">
        China’s Portfolio of Overseas Loans &amp; Grants
      </p>
      <nav className="ml-auto flex gap-[71px] pb-0.5 text-[30px] font-semibold">
        {NAV.map((item, i) => (
          <a
            key={item}
            href="#top"
            className={
              i === 0
                ? "relative px-1 whitespace-nowrap text-[#5b8777]"
                : "px-1 whitespace-nowrap text-[#545f70]"
            }
          >
            {item}
            {i === 0 && (
              <span className="absolute inset-x-0 -bottom-6 h-1.5 rounded-full bg-linear-to-r from-[#4b7f74] to-[#7aa488]" />
            )}
          </a>
        ))}
      </nav>
    </header>
  );
}

function Segment({ name, options, active }: { name: string; options: string[]; active: string }) {
  return (
    <div
      role="group"
      aria-label={name}
      className="flex h-[82px] items-start gap-2 rounded-full border-2 border-[#e9ebed] bg-[#fdfdfe] px-2 pt-1.5 text-[27px] font-medium shadow-[inset_0_4px_8px_rgba(15,23,42,0.05)]"
    >
      {options.map((option) => (
        <button
          key={option}
          type="button"
          aria-pressed={option === active}
          className={
            option === active
              ? "h-[62px] rounded-full border-2 border-[#9fbfb1] bg-[#dfe8e5] px-[29px] text-[#5b8777] shadow-[0_4px_12px_rgba(15,23,42,0.08)]"
              : "h-[66px] px-[29px] text-[#4a556c]"
          }
        >
          {option}
        </button>
      ))}
    </div>
  );
}

const SECTIONS = ["Country of Activity", "Income Groups", "Annual Totals", "Categories", "Projects"];

function Sidebar() {
  return (
    <aside className="flex w-[560px] shrink-0 flex-col rounded-t-3xl bg-[#f0f4f9]">
      <div className="border-b-2 border-[#d3d7dd] px-16 pt-12 pb-10">
        <button
          type="button"
          className="flex h-20 w-full items-center justify-center gap-4 rounded-full bg-linear-135 from-[#5b8777] via-[#518585] to-[#7aa488] text-[28px] font-medium text-white shadow-[0_16px_48px_rgba(15,23,42,0.13)]"
        >
          <Settings2 size={34} strokeWidth={2} aria-hidden="true" />
          Filters &amp; Search
        </button>
      </div>

      <div className="pr-12 pl-16">
        <h2 className="mt-[58px] text-[28px] leading-10 font-bold text-[#545f66]">Filters Applied</h2>
        <p className="mt-8 text-[28px] leading-10 font-semibold text-[#0f172a] italic">No filters are applied.</p>
        <hr className="mt-8 border-t-2 border-[#d3d7dd]" />

        <h2 className="mt-8 text-[28px] leading-10 font-bold text-[#545f66]">Visualize</h2>
        <div className="mt-[18px] flex flex-col gap-4">
          <Segment name="Measure" options={["Count", "USD"]} active="USD" />
          <Segment name="Income classification" options={["OECD", "World Bank"]} active="OECD" />
        </div>
        <p className="mt-4 text-[24px] leading-9 font-semibold text-[#667079]">
          Commitments are measured in constant 2023 USD and exclude 'rollover' amounts under emergency rescue
          lending and PBOC swap facilities. OECD aid-ineligible countries are mostly high-income.
        </p>
        <hr className="mt-8 border-t-2 border-[#d3d7dd]" />

        <h2 className="mt-8 text-[28px] leading-10 font-bold text-[#545f66]">Jump to Section</h2>
        <ul className="mt-4 mb-8 flex flex-col gap-[9px] text-[27px] font-medium">
          {SECTIONS.map((section, i) => (
            <li key={section}>
              <a
                href="#section"
                className={
                  i === 0
                    ? "flex h-[70px] items-center rounded-3xl bg-[#dce3e4] pl-[39px] text-[#5b8777]"
                    : "flex h-[70px] items-center rounded-3xl pl-[39px] text-[#4a556c]"
                }
              >
                <span className="mr-10 size-1.5 rounded-full bg-current" />
                {section}
              </a>
            </li>
          ))}
        </ul>
      </div>

      <div className="border-t-2 border-[#d3d7dd] px-16 pt-[26px] pb-8">
        <h2 className="text-[28px] leading-10 font-bold text-[#545f66]">Downloads</h2>
        <p className="mt-3 text-[24px] leading-9 font-semibold text-[#667079]">
          Exports are limited to 8,000 rows of data.
        </p>
        <button
          type="button"
          className="mt-4 flex h-20 w-full items-center justify-center gap-4 rounded-full border-2 border-[#a8cfca] text-[28px] font-medium text-[#9cbab0]"
        >
          Download Data
          <DownloadIcon />
        </button>
      </div>
    </aside>
  );
}

function DownloadIcon() {
  return (
    <svg
      viewBox="0 0 36 36"
      className="size-9"
      fill="none"
      stroke="currentColor"
      strokeWidth="2.2"
      strokeLinecap="round"
      strokeLinejoin="round"
      aria-hidden="true"
    >
      <path d="M18 5v19M10 16l8 8 8-8M4 23v6a3 3 0 0 0 3 3h22a3 3 0 0 0 3-3v-6" />
    </svg>
  );
}

function GlobeIcon() {
  return (
    <svg
      viewBox="0 0 36 36"
      className="size-9"
      fill="none"
      stroke="currentColor"
      strokeWidth="2.4"
      strokeLinecap="round"
      strokeLinejoin="round"
      aria-hidden="true"
    >
      <circle cx="18" cy="18" r="16.8" />
      <path d="M10 3v4c0 2 1 3 3 3.3l1 .2c2 .4 3 1.5 3 3.5v1c0 2.5 1.5 4 3.5 4s3.5-1.5 3.5-4c0-2.3 1.2-3.5 3.500-3.5H34" />
      <path d="M1.5 16.500H6.500c2 0 3 1 3 3v1.500c0 2.200 1 3.300 3 3.800 2.800.7 4 1.700 4 4.200v5.500" />
      <path d="M23.5 33.500v-7.500c0-2 1-3 3-3H34" />
    </svg>
  );
}

const TIERS = [
  { label: "Lower Income", swatch: "bg-[#1e3a46]" },
  { label: "Lower Middle Income", swatch: "bg-[#376b65]" },
  { label: "Upper Middle Income", swatch: "bg-[#549a8b]" },
  { label: "Aid-Ineligible", swatch: "bg-[#84cac8]" },
];

function ActivityCard() {
  return (
    <section className="flex-1 rounded-t-[48px] border-2 border-b-0 border-[#eef0f2] bg-white px-16 pt-16">
      <h1 className="border-b-2 border-[#dcdee1] pb-5 text-[36px] leading-[48px] font-bold text-[#1a2238]">
        Country of Activity • USD
      </h1>
      <div className="mt-12 flex gap-8">
        <div className="w-[488px] shrink-0">
          <div className="flex h-[88px] items-center gap-3 rounded-full border-2 border-[#ebecee] bg-white px-2 pt-0.5 shadow-[inset_0_4px_8px_rgba(15,23,42,0.05)]">
            <button
              type="button"
              aria-label="Map view"
              className="flex h-[68px] w-16 items-center justify-center rounded-full bg-[#dfe8e5] text-[#5b8777] shadow-[0_4px_12px_rgba(15,23,42,0.08)]"
            >
              <GlobeIcon />
            </button>
            <button
              type="button"
              aria-label="Bar chart view"
              className="flex h-[68px] w-16 items-center justify-center rounded-full text-[#0f172a]"
            >
              <ChartBar size={40} strokeWidth={1.5} aria-hidden="true" />
            </button>
          </div>
          <h2 className="mt-[22px] text-[28px] leading-10 font-semibold text-[#5f6872]">Income Groups</h2>
          <ul className="mt-2 text-[28px] text-[#5f6872]">
            {TIERS.map(({ label, swatch }) => (
              <li key={label} className="flex h-[50px] items-center gap-4">
                <span className={`size-7 rounded-md ${swatch}`} />
                {label}
              </li>
            ))}
          </ul>
          <p className="mt-2 text-[24px] leading-9 font-semibold text-[#5f6872]">
            Income groups reflect the last available year of data. Countries may have crossed income tiers during
            the period. Aid-ineligible countries refers to those with high incomes or who are otherwise ineligible
            for Official Development Assistance (ODA) or Other Official Flows (OOF) through the OECD
          </p>
        </div>
        <div className="min-w-0 flex-1">
          <div className="flex h-[104px] items-center gap-4 text-[#2f363f]">
            <button type="button" aria-label="Reset view" className="flex size-[72px] items-center justify-center">
              <ScanLine size={36} strokeWidth={1.75} aria-hidden="true" />
            </button>
            <button type="button" aria-label="Zoom in" className="flex size-[72px] items-center justify-center">
              <ZoomIn size={36} strokeWidth={1.5} aria-hidden="true" />
            </button>
            <button type="button" aria-label="Zoom out" className="flex size-[72px] items-center justify-center">
              <ZoomOut size={36} strokeWidth={1.5} aria-hidden="true" />
            </button>
          </div>
          <WorldMap />
        </div>
      </div>
    </section>
  );
}

function Stat({ label, value }: { label: string; value: string }) {
  return (
    <div>
      <dt className="text-[28px] leading-10 text-[#6b7280]">{label}</dt>
      <dd className="mt-0.5 text-[36px] leading-[44px] font-bold text-[#141c30]">{value}</dd>
    </div>
  );
}

export default function App() {
  return (
    <div className="flex min-h-screen flex-col bg-[#f9fafc] font-['Inter',sans-serif]">
      <div className="h-[75px] bg-black" />
      <Header />
      <main className="flex flex-1 gap-12 px-8 pt-8">
        <Sidebar />
        <div className="flex min-w-0 flex-1 flex-col gap-16">
          <dl className="flex h-[190px] items-center gap-16 rounded-[48px] border-2 border-[#eef0f2] bg-white px-12">
            <Stat label="Projects/Activities" value="31,750" />
            <div className="h-[90px] w-0.5 bg-[#e1e4e8]" />
            <Stat label="Commitments (USD, cumulative)" value="$2,168,539,300,497" />
          </dl>
          <ActivityCard />
        </div>
      </main>
    </div>
  );
}
